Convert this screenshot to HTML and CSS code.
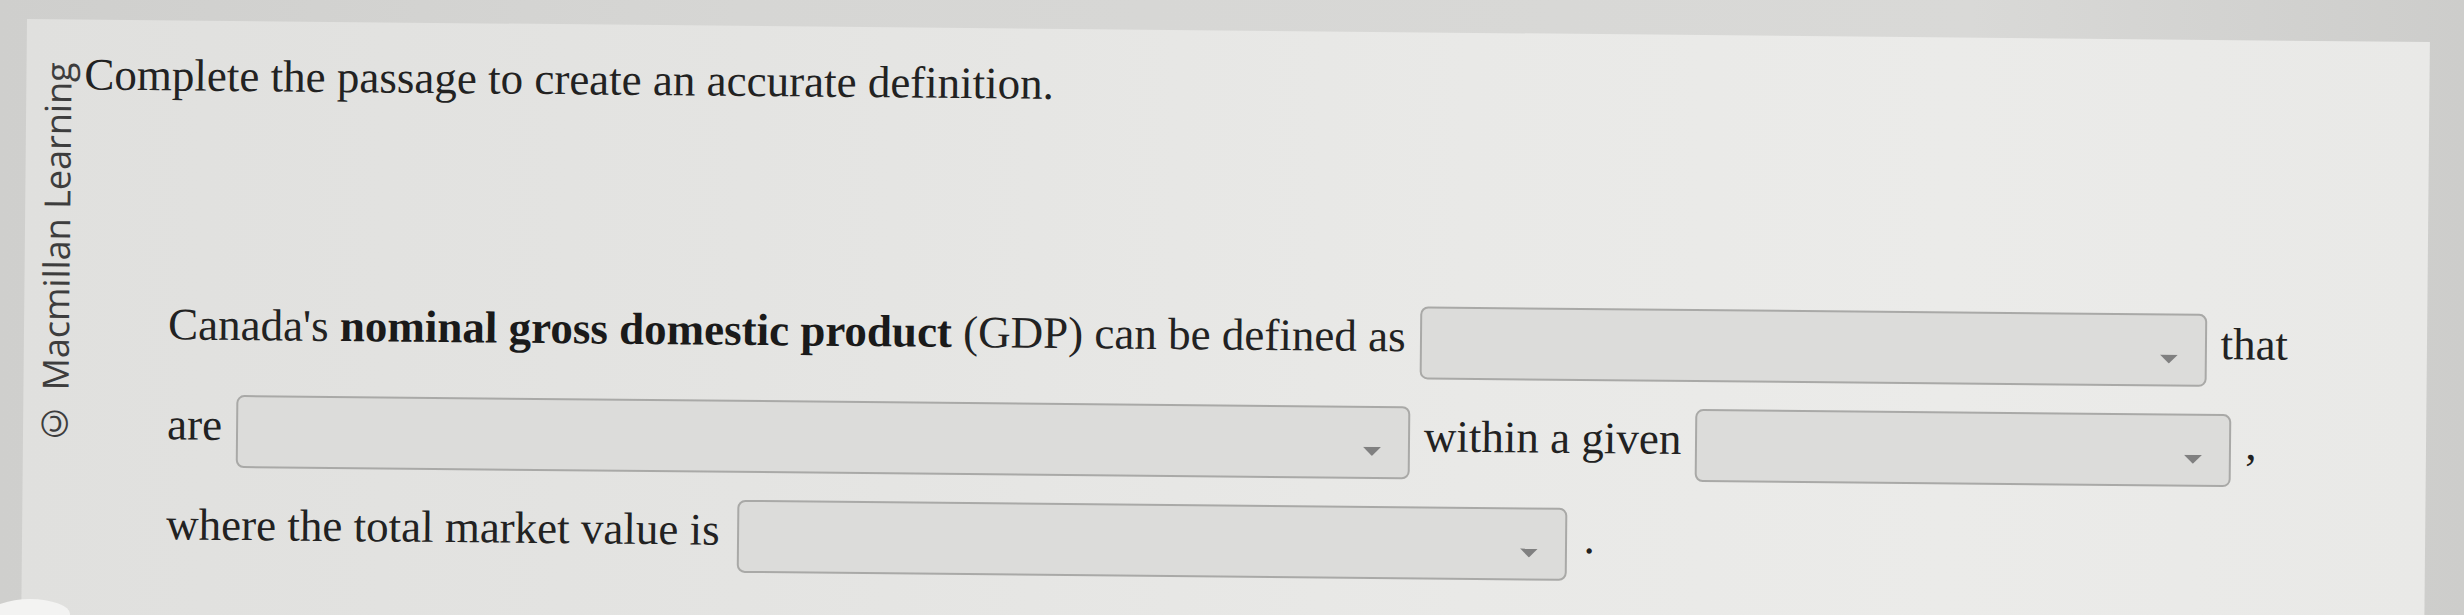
FILE: index.html
```html
<!DOCTYPE html>
<html lang="en">
<head>
<meta charset="utf-8">
<title>Complete the passage</title>
<link rel="stylesheet" href="styles.css">
</head>
<body>
<div class="screen">
  <div class="panel">
    <div class="side">© Macmillan Learning</div>
    <div class="content">
      <p class="title">Complete the passage to create an accurate definition.</p>
      <div class="passage">
        <div class="row">
          <span class="txt">Canada's <b>nominal gross domestic product</b> (GDP) can be defined as</span>
          <span class="dropdown d1"><svg class="arrow" viewBox="0 0 18 9" width="18" height="9"><polygon points="0,0 18,0 9,9"/></svg></span>
          <span class="txt">that</span>
        </div>
        <div class="row">
          <span class="txt">are</span>
          <span class="dropdown d2"><svg class="arrow" viewBox="0 0 18 9" width="18" height="9"><polygon points="0,0 18,0 9,9"/></svg></span>
          <span class="txt">within a given</span>
          <span class="dropdown d3"><svg class="arrow" viewBox="0 0 18 9" width="18" height="9"><polygon points="0,0 18,0 9,9"/></svg></span>
          <span class="txt">,</span>
        </div>
        <div class="row row3">
          <span class="txt">where the total market value is</span>
          <span class="dropdown d4"><svg class="arrow" viewBox="0 0 18 9" width="18" height="9"><polygon points="0,0 18,0 9,9"/></svg></span>
          <span class="txt">.</span>
        </div>
      </div>
    </div>
  </div>
</div>
<div class="blob"></div>
</body>
</html>
```
FILE: styles.css
```css
html, body {
  margin: 0;
  padding: 0;
}
body {
  width: 2464px;
  height: 615px;
  overflow: hidden;
  background: linear-gradient(90deg, #cfcfcd 0%, #d6d6d4 30%, #d9d9d7 80%, #cdcdcb 100%);
  position: relative;
}
.screen {
  padding: 19px 0 0 27px;
}
.panel {
  width: 2403px;
  height: 596px;
  background: linear-gradient(90deg, #e0e0de 0%, #e4e4e2 30%, #e9e9e7 60%, #ebebe9 80%, #e9e9e7 100%);
  transform: rotate(0.55deg);
  transform-origin: 0 0;
  display: flex;
  align-items: flex-start;
  overflow: hidden;
}
.side {
  margin-left: 7px;
  margin-top: 43px;
  writing-mode: vertical-rl;
  transform: rotate(180deg);
  font-family: "Open Sans", "DejaVu Sans", sans-serif;
  font-size: 36px;
  line-height: 49px;
  color: #3d3d3d;
  white-space: nowrap;
}
.content {
  display: flex;
  flex-direction: column;
  padding-top: 30px;
  padding-left: 2px;
  font-family: "Liberation Serif", "Times New Roman", serif;
  color: #222222;
}
.title {
  margin: 0;
  font-size: 45px;
  line-height: 50px;
  white-space: nowrap;
}
.passage {
  margin-top: 180px;
  padding-left: 86px;
  display: flex;
  flex-direction: column;
  gap: 13px;
}
.row {
  display: flex;
  align-items: center;
  gap: 14px;
  height: 87px;
  font-size: 45px;
}
.row3 {
  gap: 17px;
}
.txt {
  line-height: 50px;
  white-space: nowrap;
}
.txt b {
  font-weight: bold;
  color: #1a1a1a;
}
.dropdown {
  box-sizing: border-box;
  height: 73px;
  margin-top: 14px;
  border: 2.5px solid #a9a9a7;
  border-radius: 8px;
  background: #dcdcda;
  display: flex;
  justify-content: flex-end;
  align-items: flex-start;
  padding-right: 27px;
  padding-top: 39px;
}
.d1 { width: 787px; }
.d2 { width: 1174px; }
.d3 { width: 536px; }
.d4 { width: 830px; }
.arrow {
  fill: #808080;
  display: block;
}
.blob {
  position: absolute;
  left: -10px;
  bottom: -14px;
  width: 80px;
  height: 30px;
  border-radius: 50%;
  background: #f3f3f2;
}
```
